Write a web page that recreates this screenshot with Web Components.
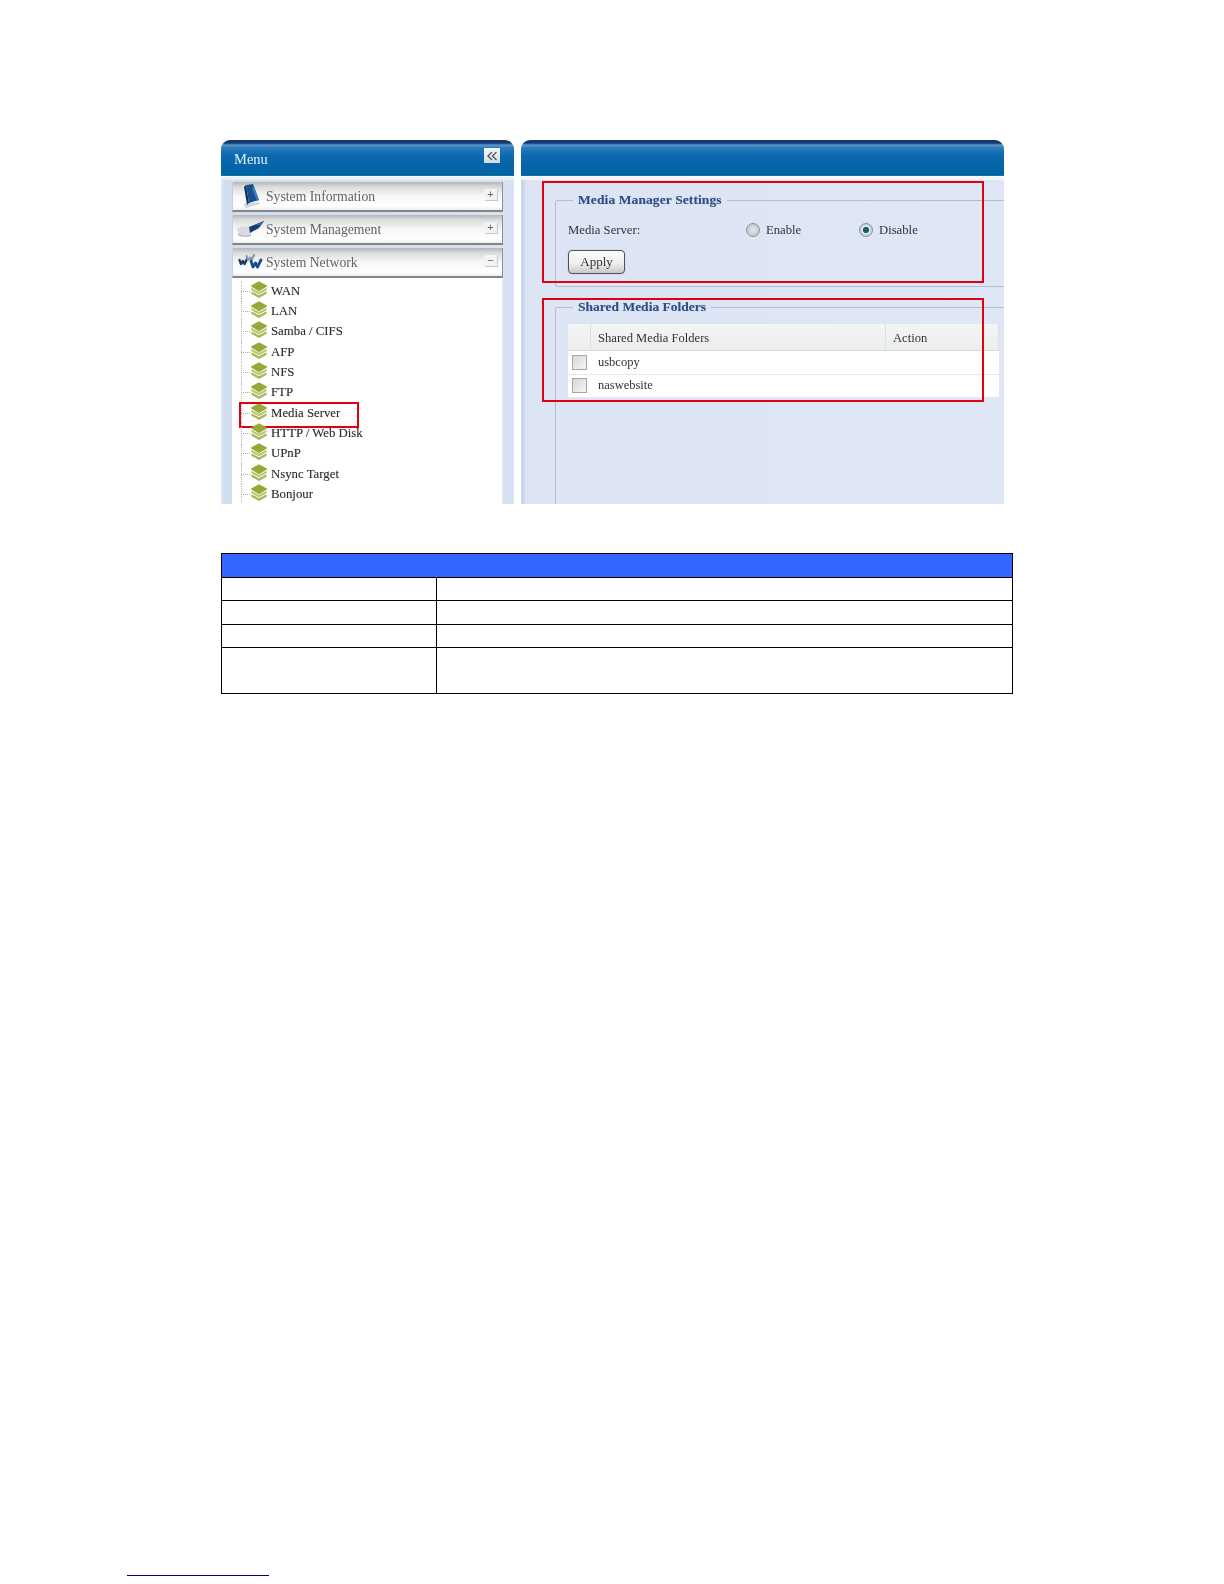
<!DOCTYPE html>
<html><head><meta charset="utf-8">
<style>html,body{margin:0;background:#fff}body{font-family:"Liberation Serif",serif}</style>
</head><body>
<x-page>
  <x-shot>
    <x-sidebar slot="side">
      <x-accordion icon="monitor" sign="+">System Information</x-accordion>
      <x-accordion icon="server" sign="+">System Management</x-accordion>
      <x-accordion icon="net" sign="−">System Network</x-accordion>
      <x-tree>
        <x-tree-item>WAN</x-tree-item><x-tree-item>LAN</x-tree-item><x-tree-item>Samba / CIFS</x-tree-item>
        <x-tree-item>AFP</x-tree-item><x-tree-item>NFS</x-tree-item><x-tree-item>FTP</x-tree-item>
        <x-tree-item marked>Media Server</x-tree-item><x-tree-item>HTTP / Web Disk</x-tree-item>
        <x-tree-item>UPnP</x-tree-item><x-tree-item>Nsync Target</x-tree-item><x-tree-item>Bonjour</x-tree-item>
      </x-tree>
    </x-sidebar>
    <x-main slot="main">
      <x-settings></x-settings>
      <x-folders></x-folders>
    </x-main>
  </x-shot>
  <x-blank-table></x-blank-table>
  <x-foot-rule></x-foot-rule>
</x-page>
<script>
const def=(name,html,init)=>customElements.define(name,class extends HTMLElement{
  connectedCallback(){ if(this.shadowRoot)return; const r=this.attachShadow({mode:'open'}); r.innerHTML=typeof html==='function'?html(this):html; init&&init(this,r);} });
const ICONS={
monitor:`<svg width="26" height="26" viewBox="0 0 26 26"><path d="M5 21 L21 19 L22 21 L8 25Z" fill="#cfd6de"/><path d="M8 2 L15 1 L21 17 L11 20Z" fill="#17508c"/><path d="M8 2 L11 20 L9 22 L6 4Z" fill="#0d3560"/><path d="M16 4 L21 17 L19 18 L14 5Z" fill="#3c7cb8"/></svg>`,
server:`<svg width="28" height="20" viewBox="0 0 28 20"><path d="M0 9 Q6 6 14 8 L14 16 Q6 18 1 15Z" fill="#d9dde2"/><path d="M1 15 Q6 18 14 16 L14 17 Q6 19 1 16Z" fill="#9aa2ac"/><path d="M12 8 L27 2 L22 9 L13 14Z" fill="#123f70"/><path d="M18 6 L27 2 L24 6Z" fill="#2f6ca8"/></svg>`,
net:`<svg width="27" height="20" viewBox="0 0 27 20" fill="none" stroke-linecap="round" stroke-linejoin="round"><path d="M1.500 8 L3 12 L5 9 L6.500 12 L9 7" stroke="#1d3d66" stroke-width="2.400"/><path d="M8.500 4 L10 8 L12 5.500 L13.500 8 L16 3" stroke="#8296ab" stroke-width="2"/><path d="M13 9 L15 15 L17.500 11 L19.500 15 L23 8" stroke="#14508c" stroke-width="2.800"/></svg>`};
const LAYERS=`<svg width="18" height="18" viewBox="0 0 18 18" stroke-linejoin="round"><path d="M1.800 11 L9 14.800 L16.200 11 L16.200 12.500 L9 16.500 L1.800 12.500Z" fill="#aab858" stroke="#aab858"/><path d="M1.800 7.500 L9 11.300 L16.200 7.500 L16.200 9 L9 13 L1.800 9Z" fill="#bcc876" stroke="#bcc876"/><path d="M9 1 L16.500 5 L9 9.300 L1.500 5Z" fill="#98a836" stroke="#98a836" stroke-width="1.400"/></svg>`;

def('x-page',`<style>:host{display:flex;flex-direction:column;box-sizing:border-box;width:1224px;height:1584px;padding:140px 0 8px}</style><slot></slot>`);
def('x-shot',`<style>:host{display:grid;grid-template-columns:293px 483px;grid-template-rows:364px;column-gap:7px;height:364px;margin-left:221px;width:783px;overflow:hidden;filter:blur(.45px)}</style><slot name="side"></slot><slot name="main"></slot>`);
def('x-titlebar',`<style>:host{display:flex;flex:none;align-items:center;box-sizing:border-box;height:36px;padding:2px 14px 0 13px;border-radius:9px 9px 0 0;color:#e4eff9;font-size:14.500px;
 background:linear-gradient(#12386c 0,#12386c 3px,#5b97cc 5px,#2a7ab8 8px,#0b68ad 16px,#0062a6 100%);box-shadow:inset 0 -1px 0 #0c7a9c}
 ::slotted(*){margin-left:auto}</style><slot></slot>`);
def('x-sidebar',`<style>:host{display:flex;flex-direction:column;min-height:0;overflow:hidden;background:#fff}
 .body{flex:1;min-height:0;overflow:hidden;display:flex;flex-direction:column;gap:3px;padding:2px 11px 0;margin-top:1px;background:linear-gradient(90deg,#e2e9f5 0,#d0dcef 4px,#d7e2f3 100%);border-top:3px solid #e3f1fa;box-sizing:border-box}
 .c{flex:0 0 auto;align-self:flex-start;margin-top:6px;box-sizing:border-box;width:16px;height:15px;background:linear-gradient(#f6f8fb,#d6dbe2);display:flex;align-items:center;justify-content:center}
 </style><x-titlebar>Menu<span class="c"><svg width="12" height="10" viewBox="0 0 12 10" fill="none" stroke="#4a5361" stroke-width="1.300"><path d="M6 1 L2 5 L6 9M10.500 1 L6.500 5 L10.500 9"/></svg></span></x-titlebar><div class="body"><slot></slot></div>`);
def('x-accordion',h=>`<style>:host{display:flex;flex:none;align-items:center;box-sizing:border-box;height:30px;padding:0 5px 0 0;color:#5f6468;font-size:13.700px;
 background:linear-gradient(#b5b5b5 0,#dcdcdc 5px,#f7f7f7 14px,#fff 24px,#eee 100%);border-bottom:2px solid #858585;border-right:1px solid #8f8f8f;border-left:1px solid #cfcfcf}
 .i{flex:0 0 33px;display:flex;justify-content:center;align-items:center;padding-left:3px;box-sizing:border-box}
 .t{flex:1;padding-top:2px}
 .s{box-sizing:border-box;margin-top:-4px;width:13px;height:11px;background:#f2f3f5;box-shadow:1px 1px 0 #c8c8c8;color:#666;font:11px/10px "Liberation Sans",sans-serif;text-align:center}</style>
 <span class="i">${ICONS[h.getAttribute('icon')]}</span><span class="t"><slot></slot></span><span class="s">${h.getAttribute('sign')}</span>`);
def('x-tree',`<style>:host{display:flex;flex-direction:column;flex:none;margin-top:-3px;padding:3px 0 0 9px;background:#fff;height:300px;box-sizing:border-box;border-right:1px solid #e4e9f2}
 </style><slot></slot>`);
def('x-tree-item',h=>`<style>:host{display:flex;flex:none;align-items:center;height:20.350px;color:#2d2d2d;font-size:12.800px;position:relative;text-shadow:0 0 1px #bbb}
 .d{width:9px;border-top:1px dotted #aaa;flex:none}
 .v{position:absolute;left:0;top:0;bottom:0;border-left:1px dotted #bbb}
 svg{flex:none;display:block;margin-top:-3px}
 .t{margin-left:3px;white-space:nowrap}
 .m{position:absolute;left:-2px;top:-1.500px;width:116px;height:22px;border:2px solid #e0000f}</style>
 <span class="v"></span><span class="d"></span>${LAYERS}<span class="t"><slot></slot></span>${h.hasAttribute('marked')?'<span class="m"></span>':''}`);
def('x-main',`<style>:host{display:flex;flex-direction:column;position:relative;overflow:hidden;min-height:0;background:#fff}
 .body{flex:1;display:flex;flex-direction:column;gap:12px;padding:12px 0 0 34px;margin-top:1px;background:linear-gradient(90deg,#c8d5ea 0,#c8d5ea 3px,#dde5f4 5px,#dfe6f5 100%);border-top:3px solid #f2f6fb;min-height:0;box-sizing:border-box}
 .r{position:absolute;box-sizing:border-box;left:21px;width:442px;border:2px solid #e0000f;pointer-events:none}
 .a{top:41px;height:102px}.b{top:158px;height:104px}</style>
 <x-titlebar></x-titlebar><div class="body"><slot></slot></div><span class="r a"></span><span class="r b"></span>`);
const FS=`fieldset{margin:0 -12px 0 0;padding:0;border:1px solid #b4bccd;border-radius:2px;min-width:0}
 legend{margin-left:17px;padding:0 5px;color:#2f4f86;font-weight:bold;font-size:13.500px;line-height:16px;text-shadow:0 0 1px #9fb0cf}`;
def('x-settings',`<style>:host{display:block;flex:none;color:#333;font-size:12.700px}${FS}
 legend{letter-spacing:.1px}
 fieldset{height:95px;box-sizing:border-box}
 .row{display:grid;grid-template-columns:178px 113px auto;align-items:center;padding:12px 0 0 12px;height:20px}
 .opt{display:flex;align-items:center;gap:6px}
 .rd{width:14px;height:14px;border-radius:50%;box-sizing:border-box;border:1px solid #8a9299;background:radial-gradient(#e4e6e8 0,#bfc3c7 90%);flex:none}
 .rd.on{background:radial-gradient(#0f5f6f 0,#15606f 32%,#dfe8ee 42%,#aeb8bd 90%)}
 button{display:block;margin:10px 0 0 12px;width:57px;height:24px;box-sizing:border-box;border:1px solid #4d5560;border-radius:4px;background:linear-gradient(#fbfbfb,#f0f0f0 55%,#c8c8c8);font:13px "Liberation Serif",serif;color:#333;padding:0;box-shadow:0 0 0 1px #d5dbe5}
 </style><fieldset><legend>Media Manager Settings</legend>
 <div class="row"><span>Media Server:</span><span class="opt"><span class="rd"></span>Enable</span><span class="opt"><span class="rd on"></span>Disable</span></div>
 <button>Apply</button></fieldset>`);
def('x-folders',`<style>:host{display:block;flex:1;color:#333;font-size:12.500px;min-height:0}${FS}
 fieldset{height:400px;box-sizing:border-box}
 .t{display:grid;grid-template-columns:23px 295px 113px;margin:9px 0 0 12px;width:431px}
 .h{height:27px;display:flex;align-items:center;padding:3px 0 0 7px;box-sizing:border-box;background:linear-gradient(#f4f5f6,#eceded);border-bottom:1px solid #d6d9dd;border-right:1px solid #dcdfe3;font-size:12.600px}
 .c{height:23.500px;display:flex;align-items:center;padding-left:7px;box-sizing:border-box;background:#fff;border-bottom:1px solid #e6e8ec}
 .cb{padding-left:4px}
 .cb i{display:block;width:15px;height:15px;box-sizing:border-box;border:1px solid #a5a5a5;background:linear-gradient(135deg,#d8d8d8,#f5f5f5)}
 </style><fieldset><legend>Shared Media Folders</legend><div class="t">
 <div class="h"></div><div class="h">Shared Media Folders</div><div class="h">Action</div>
 <div class="c cb"><i></i></div><div class="c">usbcopy</div><div class="c"></div>
 <div class="c cb"><i></i></div><div class="c">naswebsite</div><div class="c"></div>
 </div></fieldset>`);
def('x-blank-table',`<style>:host{display:block;margin:49px 0 0 221px;width:792px}
 .t{display:grid;grid-template-columns:215px 1fr;box-sizing:border-box;border:1px solid #000;border-width:1px 1px 0 1px}
 .hd{grid-column:1/3;height:23px;background:#3366ff;border-bottom:1px solid #000;box-sizing:content-box}
 .a,.b{border-bottom:1px solid #000;height:22px}.a{border-right:1px solid #000}
 .m{height:23px}.tall{height:45px}</style><div class="t"><div class="hd"></div>
 <div class="a"></div><div class="b"></div><div class="a m"></div><div class="b m"></div><div class="a"></div><div class="b"></div><div class="a tall"></div><div class="b tall"></div></div>`);
def('x-foot-rule',`<style>:host{display:block;margin:auto 0 0 127px;width:142px;height:1px;background:#000080}</style>`);
</script>
</body></html>
